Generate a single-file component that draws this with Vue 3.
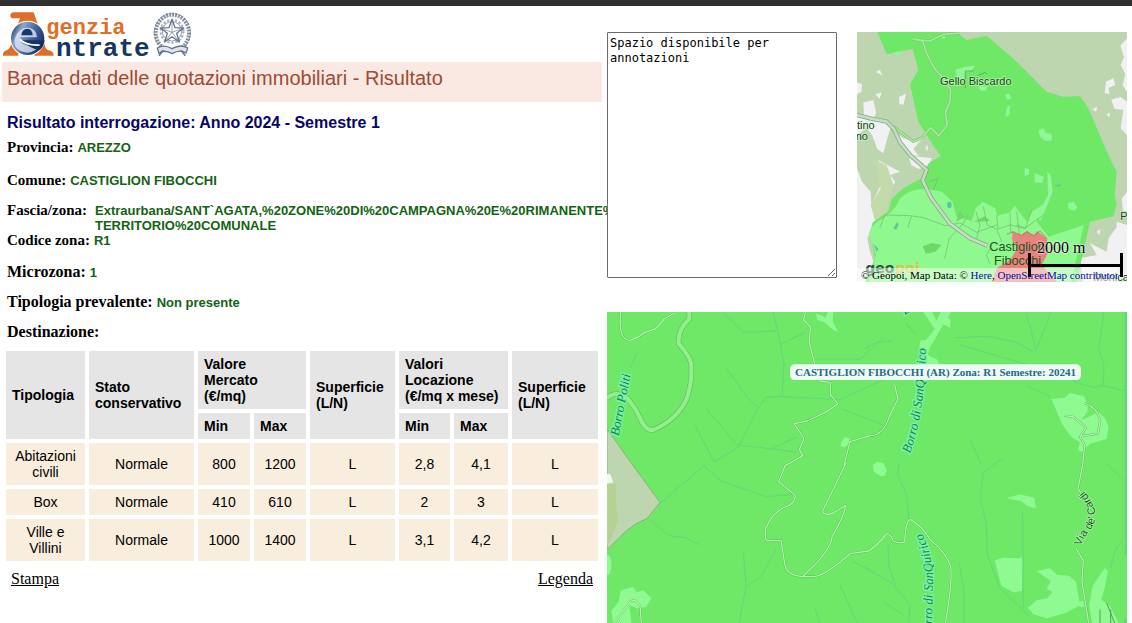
<script setup>
import { ref } from 'vue'

const notes = ref('Spazio disponibile per annotazioni')

const details = [
  { label: 'Provincia:', value: 'AREZZO', kind: 'province' },
  { label: 'Comune:', value: 'CASTIGLION FIBOCCHI', kind: 'town' },
  {
    label: 'Fascia/zona:',
    value: 'Extraurbana/SANT`AGATA,%20ZONE%20DI%20CAMPAGNA%20E%20RIMANENTE%20 TERRITORIO%20COMUNALE',
    kind: 'area'
  },
  { label: 'Codice zona:', value: 'R1', kind: 'code' },
  { label: 'Microzona:', value: '1', kind: 'micro' },
  { label: 'Tipologia prevalente:', value: 'Non presente', kind: 'main-type' },
  { label: 'Destinazione:', value: '', kind: 'use' }
]

const rows = [
  ['Abitazioni civili', 'Normale', '800', '1200', 'L', '2,8', '4,1', 'L'],
  ['Box', 'Normale', '410', '610', 'L', '2', '3', 'L'],
  ['Ville e Villini', 'Normale', '1000', '1400', 'L', '3,1', '4,2', 'L']
]
</script>

<template>
  <div class="page">
    <main class="result">
      <header class="brand">
        <svg class="logo" viewBox="0 30 600 144" role="img" aria-label="Agenzia Entrate">
          <defs>
            <linearGradient id="disc" x1="0" y1="0.2" x2="1" y2="0.7">
              <stop offset="0" stop-color="#17386f" />
              <stop offset="0.25" stop-color="#8fa6cc" />
              <stop offset="0.6" stop-color="#41629c" />
              <stop offset="1" stop-color="#12305f" />
            </linearGradient>
          </defs>
          <path d="M31 48Q31 37 42 37H101L137 143Q140 150 151 152Q161 155 161 167H103V151H50Q57 158 55 167H9Q7 155 20 151Q27 149 30 141L60 55H42Q31 55 31 48Z" fill="#df6e26" />
          <circle cx="83" cy="115" r="53" fill="#fff" />
          <circle cx="83" cy="115" r="50" fill="url(#disc)" />
          <path d="M46 139Q38 111 59 92Q81 74 103 91Q111 99 111 112H61Q60 132 80 136Q100 139 119 132Q109 158 81 158Q54 155 46 139Z" fill="#e9eef6" opacity=".75" />
          <path d="M64 106Q66 87 82 86Q97 87 98 106Z" fill="#17386f" />
          <path d="M66 121H134Q132 141 119 151Q88 145 66 121Z" fill="#15325f" />
          <path d="M60 118Q78 137 119 135" fill="none" stroke="#fff" stroke-width="5" />
          <text class="logo-text" x="139" y="101" font-size="66" fill="#df6e26">genzia</text>
          <text class="logo-text" x="168" y="167" font-size="78" fill="#173662">ntrate</text>
          <g fill="none" stroke="#66758c">
            <ellipse cx="517" cy="98" rx="50" ry="54" stroke-width="12" stroke-dasharray="6 3" opacity=".8" />
            <ellipse cx="517" cy="98" rx="54" ry="58" stroke-width="2" stroke-dasharray="11 4" />
            <circle cx="516" cy="94" r="34" stroke-width="7" stroke-dasharray="7 5" opacity=".55" />
            <circle cx="516" cy="94" r="29" stroke-width="2" />
            <path d="M516 58L525 83L551 84L530 100L538 126L516 110L494 126L502 100L481 84L507 83Z" fill="#fff" stroke-width="4" stroke-linejoin="round" />
            <path d="M516 64V97L494 126M516 97L538 126M516 97L481 84M516 97L551 84" stroke-width="2" />
            <path d="M472 144Q491 132 516 146Q542 131 563 144L558 159Q539 147 517 161Q491 147 477 160Z" fill="#dfe4ec" stroke-width="4" />
            <path d="M490 151L477 167M543 151L556 167" stroke-width="5" />
          </g>
        </svg>
      </header>

      <h1>Banca dati delle quotazioni immobiliari - Risultato</h1>
      <h2>Risultato interrogazione: Anno 2024 - Semestre 1</h2>

      <dl class="details">
        <div v-for="item in details" :key="item.kind" class="detail" :class="item.kind">
          <dt>{{ item.label }}</dt>
          <dd v-if="item.value">{{ item.value }}</dd>
        </div>
      </dl>

      <table>
        <colgroup>
          <col class="c-type" /><col class="c-state" /><col class="c-num" /><col class="c-num" />
          <col class="c-area" /><col class="c-rent" /><col class="c-max" /><col class="c-last" />
        </colgroup>
        <thead>
          <tr>
            <th rowspan="2" scope="col">Tipologia</th>
            <th rowspan="2" scope="col">Stato conservativo</th>
            <th colspan="2" scope="colgroup">Valore<br />Mercato<br />(€/mq)</th>
            <th rowspan="2" scope="col">Superficie (L/N)</th>
            <th colspan="2" scope="colgroup">Valori<br />Locazione<br />(€/mq x mese)</th>
            <th rowspan="2" scope="col">Superficie (L/N)</th>
          </tr>
          <tr>
            <th scope="col">Min</th>
            <th scope="col">Max</th>
            <th scope="col">Min</th>
            <th scope="col">Max</th>
          </tr>
        </thead>
        <tbody>
          <tr v-for="row in rows" :key="row[0]">
            <td v-for="(cell, i) in row" :key="i">{{ cell }}</td>
          </tr>
        </tbody>
      </table>

      <nav class="actions">
        <a href="#stampa">Stampa</a>
        <a href="#legenda">Legenda</a>
      </nav>
    </main>

    <aside class="side">
      <div class="top-row">
        <textarea v-model="notes" aria-label="Annotazioni"></textarea>

        <div class="overview">
          <svg class="map" viewBox="21 21 810 750" preserveAspectRatio="xMidYMid slice" role="img" aria-label="Mappa di inquadramento">
            <rect x="0" y="0" width="900" height="800" fill="#bdd6b0" />
            <g fill="#f1f1f3">
              <path d="M40 232L70 226L78 262L72 278L96 284L124 300L112 340L100 385L82 372L66 330L50 310L21 330V268L42 272Z" />
              <path d="M78 140L90 134L97 152ZM21 172L36 178L34 200L21 208ZM76 208L96 202L88 222ZM147 216L168 206L160 240L148 236ZM226 368L234 360L232 380Z" />
              <path d="M130 318L160 340L200 352L218 338L190 372L206 392L180 390L150 362Z" />
              <path d="M21 430L36 470L62 500L64 540L92 480L100 440L84 405L150 440L120 450L136 470L118 500L104 550L74 590L52 640L60 680L72 715L50 771H21Z" />
              <path d="M176 392L214 396L246 400L232 424L206 432L184 420Z" />
              <path d="M811 62L831 40V200L818 180L826 148L812 120L822 96ZM768 170L790 160L796 180L776 188L778 208L764 204ZM784 224L812 216L831 230V330L812 310L820 254L794 252ZM726 252L742 246L738 260ZM770 268L780 262L778 278Z" />
              <path d="M720 655L770 680L776 640L800 606L800 590L831 600V771H700L690 700L740 690ZM816 520L831 500V560L818 556ZM740 620L752 612L748 630Z" />
            </g>
            <path d="M60 400L110 420L130 480L106 560L76 590L62 540L92 490L80 430Z" fill="#c3dbaa" />
            <path d="M82 21L110 88L188 72L205 135L180 178L205 290L250 362L272 392L235 416L215 460L160 490L125 522L115 560L68 592L60 625L75 700L45 771H680L700 680L720 590L790 574L800 540L794 510L800 440L775 390L715 250L690 213L640 215L590 200L555 165L495 105L410 32L350 45L320 21Z" fill="#6fe868" />
            <path d="M250 495Q190 482 150 520Q140 550 104 577Q62 600 56 625L78 690L58 771H664L690 650L702 600L640 620L596 635L560 590L585 535L545 560L530 590L494 542L480 562L442 572L436 550L398 530L378 548L364 588L320 575L308 530L275 500Z" fill="#8ff88f" />
            <g fill="#8ff79a">
              <path d="M128 84L150 78L154 90L138 90ZM316 134L344 126L374 122L366 136L346 142L342 166L322 158ZM385 182L412 184L408 198L390 196ZM274 32L284 30L286 42L276 40ZM566 316L580 310L588 324L604 326L606 346L588 348L570 336ZM466 208L478 206L484 222L470 224ZM470 248L480 240L478 270L466 276ZM554 444L568 450L582 455L576 474L554 472ZM654 534L672 530L682 548L672 558L656 552ZM524 430L538 432L536 450L524 452Z" />
              <path d="M592 440L602 450L608 500L588 550L570 590L562 570L594 510Z" />
            </g>
            <path d="M218 664L246 654L274 660L256 680L228 686ZM330 558L344 576L318 590ZM372 590L404 574L420 588Z" fill="#6ed765" />
            <g fill="#5ac8a0">
              <ellipse cx="298" cy="540" rx="7" ry="10" />
              <path d="M130 610L142 590L146 600L138 614ZM70 656L86 672L80 680ZM614 480L636 478L624 486Z" />
            </g>
            <g fill="none" stroke="#6fb86f" stroke-width="2">
              <path d="M90 608L104 570L180 572L220 578L286 602L330 594L380 622L440 600M174 608L184 574M284 700L298 640L336 600L354 570M400 545L412 600L440 612L455 650M480 565L482 620L520 640M545 555L526 610L500 600M425 660L410 690L420 718M250 496L264 460L238 470" />
              <path d="M378 560L390 600L380 640M440 570L444 612L480 600L525 610L580 570M500 560L510 640L550 630" />
            </g>
            <path d="M488 620L512 630L532 618L552 632L562 618L590 640L596 680L575 720L620 771H425L440 730L480 705L502 670L486 644Z" fill="#ef7c7c" opacity=".95" />
            <path d="M470 628L490 620L514 632L530 620L550 632L570 618L592 642" fill="none" stroke="#a36a61" stroke-width="2" />
            <g fill="none" stroke-linejoin="round">
              <path d="M188 42L240 48L280 28L330 24M188 42L218 48L230 86L256 134L272 150L302 194L300 230L286 262L292 300L266 332L242 308L218 336L190 350L130 305" stroke="#83ba76" stroke-width="8" />
              <path d="M188 42L240 48L280 28L330 24M188 42L218 48L230 86L256 134L272 150L302 194L300 230L286 262L292 300L266 332L242 308L218 336L190 350L130 305" stroke="#a1ef94" stroke-width="5" />
              <path d="M21 270L60 280L110 290L132 312L150 352L184 394L230 434L218 466L244 520L300 596L360 640L412 662" stroke="#87ac83" stroke-width="13" />
              <path d="M21 270L60 280L110 290L132 312L150 352L184 394L230 434L218 466L244 520L300 596L360 640L412 662" stroke="#c7dcc4" stroke-width="8" />
              <path d="M346 190V138H370M382 152L406 142L412 148" stroke="#4b9a50" stroke-width="2" />
            </g>
            <g class="place">
              <text x="270" y="181">Gello Biscardo</text>
              <text x="21" y="312">tino</text>
              <text x="17" y="345">no</text>
              <text class="town-name" x="418" y="678">Castiglioni</text>
              <text class="town-name" x="432" y="721">Fibocchi</text>
              <text x="811" y="585">P</text>
              <text x="730" y="768">Monica</text>
            </g>
            <g class="provider">
              <text x="46" y="745" fill="#315347">geo</text>
              <text x="136" y="745" fill="#dcc04c">poi</text>
            </g>
          </svg>
          <p class="credits">
            © Geopoi, Map Data: © <a href="#here">Here</a>, <a href="#osm">OpenStreetMap contributors</a>
          </p>
          <div class="scale"><span>2000 m</span></div>
        </div>
      </div>

      <svg class="map detail-map" viewBox="21 21 1560 933" preserveAspectRatio="xMinYMin slice" role="img" aria-label="Mappa della zona R1">
        <defs>
          <path id="stream-north" d="M930 446Q978 320 978 90" />
          <path id="stream-south" d="M996 1030L998 850Q1004 760 966 684" />
          <path id="street-line" d="M1442 724Q1452 696 1472 674Q1492 646 1484 614Q1474 580 1446 552" />
        </defs>
        <rect x="0" y="0" width="1700" height="1100" fill="#6fe868" />
        <path d="M21 372L98 480L180 592L142 640Q94 660 64 692L21 734Z" fill="#bdd6b0" stroke="#91ae82" stroke-width="3" />
        <path d="M21 538L48 536V594L54 640L38 690L21 724Z" fill="#b6d191" />
        <path d="M21 508L30 506L40 532L21 536Z" fill="#f6f6f4" />

        <g fill="#8ffa92">
          <path d="M648 26L668 32L676 40L684 21H700L698 48L714 82L696 72L674 52L652 44Z" />
          <path d="M970 21H996L1010 48L1022 21H1052L1044 38L1052 44L1050 68L1030 58L1012 90L988 130L984 150L1012 164L1018 180H970V148L958 126L962 106H978L1004 72Z" />
          <path d="M1354 282L1394 278L1410 264L1452 274L1464 300L1462 322L1442 346L1470 334L1496 320L1516 342L1526 366L1520 402L1470 416L1446 440L1434 434L1440 412L1414 396L1386 356Z" />
          <path d="M724 410L736 396L750 402L746 416L732 428L722 422ZM818 480L832 470L850 474L860 494L854 512L842 514L822 500Z" />
          <path d="M1220 580L1258 568L1302 578L1308 610L1280 602L1264 588Z" />
          <path d="M1184 766L1210 758L1262 760L1268 752L1266 858L1240 862L1204 842Z" />
          <path d="M1310 798L1350 790L1372 810L1408 812L1428 830L1438 890L1450 888L1454 906L1434 904L1396 924L1340 940L1300 928L1284 908L1310 886L1342 880L1358 860L1340 852L1352 828Z" />
          <path d="M1478 842L1514 790L1524 798L1516 840L1504 884L1530 904L1556 954H1476L1468 900Z" />
          <path d="M62 856L98 846L110 862L130 856L154 880L138 906L110 910L88 900L94 954H40L34 918L56 890Z" />
          <ellipse cx="24" cy="780" rx="10" ry="30" />
        </g>

        <g fill="none" stroke="#5fd879" stroke-width="3">
          <path d="M370 24L430 82L528 78M520 21L542 118L552 180L546 275M542 118L615 82M380 190L438 272L474 308M546 275L498 276L472 314L420 416L410 430L342 470L285 360M318 310L412 420L520 432L590 442M520 428L590 396M546 275L720 284L850 224M110 145L90 190M314 480L182 594M310 480L362 528L500 575L580 568M148 644L208 692L258 698L298 720M430 740L438 840L418 954M438 846L482 816L528 734" />
          <path d="M650 162H780L850 98M725 312L850 360M795 130L830 112L878 108M915 50L948 90M1068 98L1160 94L1245 110L1300 140M1280 25L1308 136L1352 24M1080 120L1280 178M1512 21L1496 132L1512 182L1510 242L1484 248L1440 236L1390 214M1510 242L1575 258M1280 242L1350 274M1110 400L1144 480M1208 460L1150 502L1140 580L1158 650L1162 750L1200 850L1290 936" />
          <path d="M898 474L892 508L920 570L926 640M864 720L866 780L886 840M795 788L880 838L930 900L926 954M720 840L772 954M850 890L910 930M1268 620L1270 910M1516 474L1570 522M1570 700L1544 740L1532 788M1078 774L1092 860V954M760 770L820 802M645 910L658 954" />
        </g>
        <path d="M1577 21V750M1576 940V954" stroke="#57bfa0" stroke-width="6" opacity=".5" />

        <g fill="none" stroke-linejoin="round">
          <path v-for="layer in ['edge', 'fill']" :key="layer" class="road" :class="layer" d="M62 21Q54 104 88 106Q118 98 134 82L166 72Q180 58 192 42L224 24M616 21L611 44L632 66L627 110L645 180L660 228L690 232L692 270L714 296L680 320L622 348L582 356L612 400L598 434L608 452L574 472L555 482L536 530L585 570Q588 590 566 602Q520 616 498 668Q490 714 510 706H543L555 782Q564 814 606 814H646Q680 808 750 746L806 738Q838 716 856 690Q866 676 880 708Q904 718 914 710Q918 640 932 644Q964 660 992 706Q1038 742 1052 784Q1058 832 1036 954M738 474L668 618Q670 634 700 624L736 602Q736 626 696 696Q694 724 650 774L610 812M732 482L750 410L810 392Q850 392 868 334L894 282L884 240M1394 332L1422 336L1458 368L1440 396L1454 420L1448 480L1434 550L1450 576M1428 730L1450 766L1446 830L1466 954M1454 294Q1494 310 1500 346L1494 386L1440 394M44 954L92 888Q108 882 120 902L124 954" />
          <path v-for="layer in ['edge', 'fill']" :key="'wide-' + layer" class="main-road" :class="layer" d="M21 280Q46 254 82 280Q110 312 126 352Q146 384 166 372Q232 342 260 282Q280 220 272 170Q264 148 236 116Q232 74 268 42V21" />
          <path d="M1500 914V954M1520 894L1544 954M1532 914V954" stroke="#559d59" stroke-width="3" />
        </g>

        <g class="stream">
          <text transform="translate(56 394) rotate(-79)">Borro Politi</text>
          <text><textPath href="#stream-north">Borro di SanQuirico</textPath></text>
          <text text-anchor="end"><textPath href="#stream-south" startOffset="100%">Borro di SanQuirico</textPath></text>
          <text transform="translate(914 30) rotate(-30)">B</text>
        </g>
        <g class="street">
          <text><textPath href="#street-line">Via de' Cardi</textPath></text>
        </g>
        <rect x="570" y="178" width="873" height="47" rx="14" fill="#effaf7" />
        <text class="zone" x="585" y="213">CASTIGLION FIBOCCHI (AR) Zona: R1 Semestre: 20241</text>
      </svg>
    </aside>
  </div>
</template>

<style>
html,
body {
  background: #fff;
}
</style>

<style scoped>
.page {
  box-sizing: border-box;
  display: grid;
  grid-template-columns: minmax(0, 607fr) minmax(0, 525fr);
  min-height: 100vh;
  border-top: 6px solid #303030;
  font-family: "Liberation Serif", "Times New Roman", serif;
  color: #000;
}

.brand {
  height: 56px;
}

.logo {
  display: block;
  width: 200px;
  height: 48px;
  padding-top: 4px;
  overflow: visible;
}

.logo-text {
  font-family: "Liberation Mono", monospace;
  font-weight: 700;
}

h1 {
  height: 40px;
  box-sizing: border-box;
  margin: 0 5px 0 2px;
  padding: 4px 5px;
  background: #f9e9e2;
  color: #a04a34;
  font: 20px/24px "Liberation Sans", Arial, sans-serif;
}

h2 {
  margin: 11px 7px 5px;
  color: #060666;
  font: bold 16px/20px "Liberation Sans", Arial, sans-serif;
}

.details {
  margin: 0 0 6px 7px;
}

.detail {
  display: flex;
  align-items: baseline;
  gap: 4px;
  height: 18px;
  margin-bottom: 12px;
  line-height: 18px;
}

dt {
  flex: none;
  font-size: 15px;
  font-weight: 700;
}

dd {
  margin: 0;
  color: #126312;
  font-family: "Liberation Sans", Arial, sans-serif;
  font-size: 13px;
  font-weight: 700;
}

.province {
  margin-bottom: 15px;
}

.area {
  gap: 8px;
}

.area dd {
  line-height: 15px;
}

.code {
  margin-bottom: 14px;
}

.micro dt,
.main-type dt,
.use dt {
  font-size: 16px;
}

.use {
  margin-bottom: 0;
}

table {
  width: calc(100% - 7px);
  margin-left: 2px;
  border-spacing: 4px;
  table-layout: fixed;
  font: 14px/16px "Liberation Sans", Arial, sans-serif;
}

.c-type { width: 79px; }
.c-state { width: 105px; }
.c-num { width: 52px; }
.c-area { width: 85px; }
.c-rent { width: 51px; }
.c-max { width: 54px; }
.c-last { width: 86px; }

th {
  padding: 5px 6px;
  background: #e5e5e5;
  text-align: left;
}

td {
  padding: 5px 6px;
  background: #f9eddd;
  text-align: center;
}

th[scope="colgroup"] {
  white-space: nowrap;
}

.actions {
  display: flex;
  justify-content: space-between;
  margin: 5px 14px 0 11px;
  font-size: 16px;
  line-height: 18px;
}

.actions a {
  color: #000;
}

.side {
  position: relative;
  display: flex;
  flex-direction: column;
  gap: 30px;
  padding: 26px 5px 0 0;
}

.top-row {
  display: flex;
  gap: 20px;
}

textarea {
  box-sizing: border-box;
  flex: none;
  width: 230px;
  height: 246px;
  margin: 0;
  padding: 3px 2px;
  border: 1px solid #6c6c6c;
  border-radius: 1px;
  background: #fff;
  color: #000;
  font: 12px/15px "DejaVu Sans Mono", monospace;
}

.overview {
  position: relative;
  flex: 1;
  height: 250px;
  overflow: hidden;
}

.map {
  display: block;
  width: 100%;
  height: 100%;
}

.detail-map {
  flex: 1 1 0;
  min-height: 0;
}

.place text {
  font: 33px "Liberation Sans", Arial, sans-serif;
  fill: #243b28;
  stroke: rgb(210 255 205 / 60%);
  stroke-width: 5px;
  paint-order: stroke;
}

.place .town-name {
  font-size: 38px;
  fill: #24521f;
  stroke: none;
}

.provider text {
  font: bold 42px "DejaVu Sans", sans-serif;
}

.credits {
  position: absolute;
  left: 0;
  right: 9px;
  bottom: 0;
  margin: 0;
  padding-left: 4px;
  overflow: hidden;
  background: rgb(255 255 255 / 50%);
  font-size: 11px;
  line-height: 14px;
  white-space: nowrap;
}

.credits a {
  color: #0b0ba8;
  text-decoration: none;
}

.scale {
  position: absolute;
  right: 4px;
  bottom: 5px;
  width: 89px;
  height: 24px;
  border: solid #000;
  border-width: 0 3px;
  background: linear-gradient(#000, #000) center / 100% 3px no-repeat;
}

.scale span {
  position: absolute;
  left: 6px;
  bottom: 20px;
  font-size: 16px;
  line-height: 18px;
  white-space: nowrap;
  text-shadow: 0 0 2px #fff, 0 0 2px #fff;
}

.road.edge {
  stroke: #4fae54;
  stroke-width: 6px;
}

.road.fill {
  stroke: #b3f7ab;
  stroke-width: 4px;
}

.main-road.edge {
  stroke: #68be62;
  stroke-width: 16px;
}

.main-road.fill {
  stroke: #92f08b;
  stroke-width: 12px;
}

.stream text {
  font: italic 39px "Liberation Serif", serif;
  fill: #15834f;
  stroke: #79f2a5;
  stroke-width: 8px;
  paint-order: stroke;
}

.street text {
  font: 33px "Liberation Sans", Arial, sans-serif;
  fill: #17521f;
  stroke: #b0fbaa;
  stroke-width: 4px;
  paint-order: stroke;
}

.zone {
  font: bold 33px "Liberation Serif", serif;
  fill: #246b86;
}
</style>
